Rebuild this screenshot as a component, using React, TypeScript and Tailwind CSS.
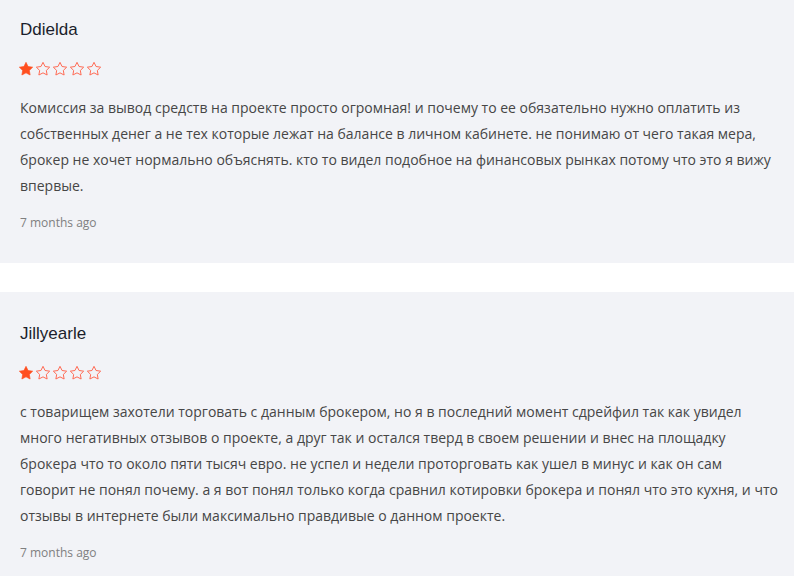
import React from 'react';

type Review = {
  id: number;
  author: string;
  rating: number;
  text: string;
  date: string;
};

const REVIEWS: Review[] = [
  {
    id: 1,
    author: 'Ddielda',
    rating: 1,
    text: 'Комиссия за вывод средств на проекте просто огромная! и почему то ее обязательно нужно оплатить из собственных денег а не тех которые лежат на балансе в личном кабинете. не понимаю от чего такая мера, брокер не хочет нормально объяснять. кто то видел подобное на финансовых рынках потому что это я вижу впервые.',
    date: '7 months ago',
  },
  {
    id: 2,
    author: 'Jillyearle',
    rating: 1,
    text: 'с товарищем захотели торговать с данным брокером, но я в последний момент сдрейфил так как увидел много негативных отзывов о проекте, а друг так и остался тверд в своем решении и внес на площадку брокера что то около пяти тысяч евро. не успел и недели проторговать как ушел в минус и как он сам говорит не понял почему. а я вот понял только когда сравнил котировки брокера и понял что это кухня, и что отзывы в интернете были максимально правдивые о данном проекте.',
    date: '7 months ago',
  },
];

const STAR_POINTS =
  '12,2 15.09,8.26 22,9.27 17,14.14 18.18,21.02 12,17.77 5.82,21.02 7,14.14 2,9.27 8.91,8.26';

const Star: React.FC<{ filled: boolean }> = ({ filled }) => (
  <svg width="16" height="16" viewBox="0 0 24 24" className="shrink-0">
    <polygon
      points={STAR_POINTS}
      fill={filled ? '#ff4f1f' : 'none'}
      stroke={filled ? '#ff4f1f' : '#ff6b55'}
      strokeWidth={filled ? 1 : 1.5}
      strokeLinejoin="round"
    />
  </svg>
);

const ReviewCard: React.FC<{ review: Review; first?: boolean }> = ({ review, first }) => (
  <div className={`bg-[#f2f3f7] pl-5 pr-4 pt-[30px] pb-[31px] ${first ? '-mt-3' : ''}`}>
    <h3 className="text-[17px] leading-[24px] text-[#1b1e2c] font-['Liberation_Sans',Arial,sans-serif]">
      {review.author}
    </h3>
    <div className="mt-[19px] -ml-[2px] flex items-center gap-[1px]">
      {[0, 1, 2, 3, 4].map((i) => (
        <Star key={i} filled={i < review.rating} />
      ))}
    </div>
    <p className="mt-[18px] text-[14px] leading-[26px] text-[#464646] font-['Open_Sans',sans-serif]">
      {review.text}
    </p>
    <div className="mt-[15px] text-[12px] leading-[18px] text-[#808080] font-['Open_Sans',sans-serif]">
      {review.date}
    </div>
  </div>
);

export default function App() {
  return (
    <div className="w-[794px] h-[576px] overflow-hidden bg-white">
      {REVIEWS.map((review, idx) => (
        <div key={review.id} className={idx > 0 ? 'mt-[29px]' : ''}>
          <ReviewCard review={review} first={idx === 0} />
        </div>
      ))}
    </div>
  );
}
